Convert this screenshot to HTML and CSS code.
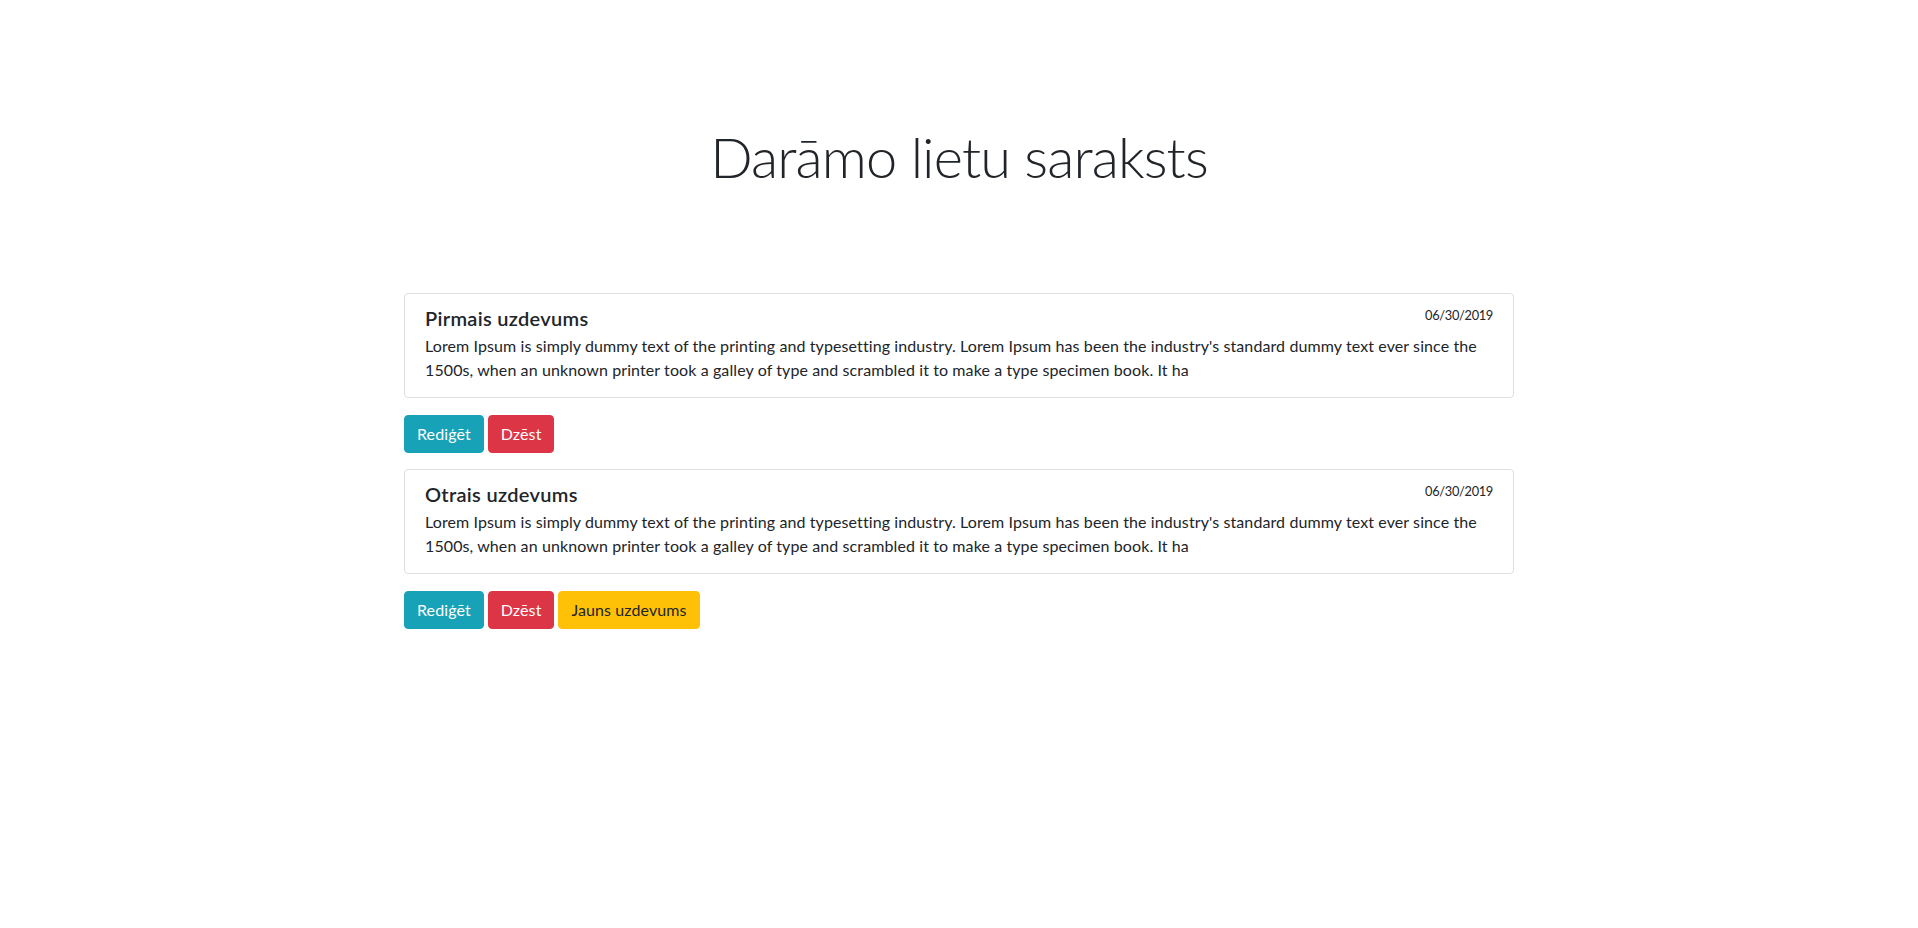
FILE: index.html
```html
<!DOCTYPE html>
<html lang="lv">
<head>
<meta charset="utf-8">
<title>Darāmo lietu saraksts</title>
<link rel="stylesheet" href="styles.css">
</head>
<body>
<div class="container">
  <h1 class="page-title">Darāmo lietu saraksts</h1>
  <div class="task">
    <div class="card">
      <div class="card-head">
        <h5 class="card-title">Pirmais uzdevums</h5>
        <small class="date">06/30/2019</small>
      </div>
      <p class="card-text">Lorem Ipsum is simply dummy text of the printing and typesetting industry. Lorem Ipsum has been the industry's standard dummy text ever since the 1500s, when an unknown printer took a galley of type and scrambled it to make a type specimen book. It ha</p>
    </div>
    <div class="actions">
      <button class="btn btn-info">Rediģēt</button>
      <button class="btn btn-danger">Dzēst</button>
    </div>
  </div>
  <div class="task">
    <div class="card">
      <div class="card-head">
        <h5 class="card-title">Otrais uzdevums</h5>
        <small class="date">06/30/2019</small>
      </div>
      <p class="card-text">Lorem Ipsum is simply dummy text of the printing and typesetting industry. Lorem Ipsum has been the industry's standard dummy text ever since the 1500s, when an unknown printer took a galley of type and scrambled it to make a type specimen book. It ha</p>
    </div>
    <div class="actions">
      <button class="btn btn-info">Rediģēt</button>
      <button class="btn btn-danger">Dzēst</button>
      <button class="btn btn-warning">Jauns uzdevums</button>
    </div>
  </div>
</div>
</body>
</html>
```
FILE: styles.css
```css
* { box-sizing: border-box; }
html, body { margin: 0; background: #fff; }
body {
  font-family: Lato, "Open Sans", sans-serif;
  font-size: 16px;
  line-height: 1.5;
  color: #212529;
}
.container {
  max-width: 1140px;
  margin: 0 auto;
  padding: 0 15px;
}
.page-title {
  margin: 0;
  padding-top: 123px;
  padding-bottom: 103px;
  text-align: center;
  font-size: 56px;
  font-weight: 300;
  line-height: 67px;
  letter-spacing: -0.9px;
}
.task { margin-bottom: 16px; }
.card {
  border: 1px solid rgba(0,0,0,.125);
  border-radius: 4px;
  padding: 12px 20px 15px 20px;
}
.card-head {
  display: flex;
  justify-content: space-between;
  align-items: flex-start;
}
.card-title {
  margin: 0 0 4px;
  font-size: 20px;
  font-weight: 600;
  line-height: 24px;
  letter-spacing: 0.3px;
}
.date { font-size: 12.8px; line-height: 19px; letter-spacing: -0.3px; }
.card-text { margin: 0; letter-spacing: 0.1px; }
.actions {
  display: flex;
  gap: 4px;
  margin-top: 17px;
}
.btn {
  font-family: inherit;
  font-size: 16px;
  line-height: 24px;
  letter-spacing: 0.1px;
  padding: 6px 12px;
  border: 1px solid transparent;
  border-radius: 4px;
  color: #fff;
}
.btn-info { background: #17a2b8; border-color: #17a2b8; }
.btn-danger { background: #dc3545; border-color: #dc3545; }
.btn-warning { background: #ffc107; border-color: #ffc107; color: #212529; }
```
